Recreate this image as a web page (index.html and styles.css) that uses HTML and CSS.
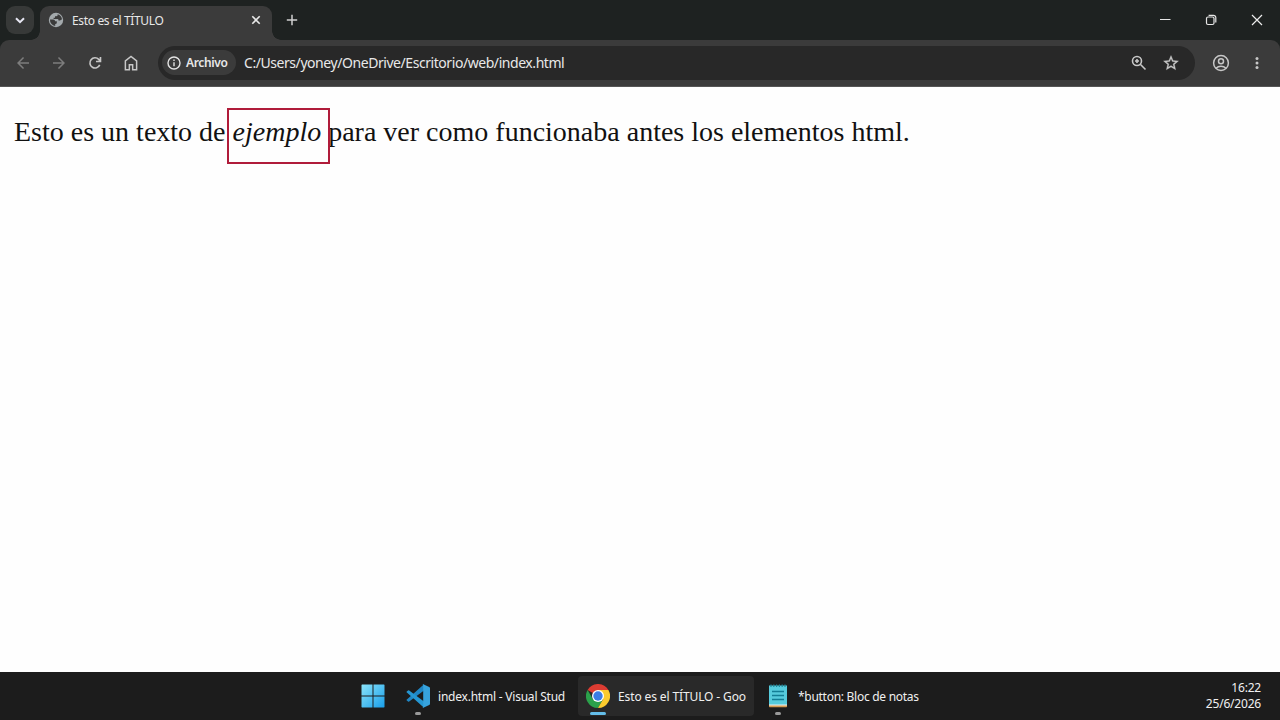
FILE: index.html
```html
<!DOCTYPE html>
<html lang="es">
<head>
  <meta charset="UTF-8">
  <title>Esto es el TÍTULO</title>
  <link rel="stylesheet" href="styles.css">
</head>
<body>

  <!-- BARRA DE PESTAÑAS -->
  <header class="pestanas">
    <button class="buscar-pestanas">
      <svg width="28" height="28" viewBox="0 0 28 28"><path d="M10 12.200l4 4 4-4" fill="none" stroke="#e8e8f4" stroke-width="2"/></svg>
    </button>
    <div class="pestana">
      <svg class="globo" width="16" height="16" viewBox="0 0 16 16">
        <circle cx="8" cy="8" r="7.200" fill="#a3a9ac"/>
        <path d="M2 7.600h3.300q1.800 0 1.800 1.600h1.700v1.500q0 1.200-1.600 1.300v2A6 6 0 0 1 2 7.600zM9.600 2.200v1q0 1.100-1.500 1.100H7v1.500H5.600v1.300h4q.9 0 .9 1.400h1.300q.8 0 1.200-.8l1-.1a6 6 0 0 0-4.400-5.400z" fill="#3b3b3b"/>
      </svg>
      <span class="titulo">Esto es el TÍTULO</span>
      <svg width="16" height="16" viewBox="0 0 16 16"><path d="M4.300 4.300l7.400 7.400M11.700 4.300l-7.400 7.400" stroke="#e8e8e8" stroke-width="1.600"/></svg>
    </div>
    <svg class="nueva" width="16" height="16" viewBox="0 0 16 16"><path d="M8 2.800v10.400M2.800 8h10.400" stroke="#d0d0d0" stroke-width="1.500"/></svg>
    <div class="ventana">
      <svg width="46" height="40" viewBox="0 0 46 40"><path d="M18 19.500h10.500" stroke="#e6e6e6" stroke-width="1"/></svg>
      <svg width="46" height="40" viewBox="0 0 46 40"><g fill="none" stroke="#e6e6e6" stroke-width="1.200"><rect x="18.500" y="17" width="7.500" height="7.500" rx="1.500"/><path d="M20.600 15.300h4.900a2.300 2.300 0 0 1 2.300 2.300v4.900"/></g></svg>
      <svg width="46" height="40" viewBox="0 0 46 40"><path d="M18 15l10 10M28 15l-10 10" stroke="#ededed" stroke-width="1.200"/></svg>
    </div>
  </header>

  <!-- BARRA DE NAVEGACIÓN -->
  <nav class="barra">
    <div class="botones">
      <svg class="apagado" width="18" height="18" viewBox="0 0 24 24"><path d="M20 11H7.830l5.590-5.590L12 4l-8 8 8 8 1.410-1.410L7.830 13H20z"/></svg>
      <svg class="apagado" width="18" height="18" viewBox="0 0 24 24"><path d="M12 4l-1.410 1.410L16.170 11H4v2h12.170l-5.580 5.590L12 20l8-8z"/></svg>
      <svg width="18" height="18" viewBox="0 0 24 24"><path d="M18.300 14.500A6.800 6.800 0 1 1 17 7.200L19 9.300M19.300 4v6h-6" fill="none" stroke="#c7c7c7" stroke-width="2.200"/></svg>
      <svg width="18" height="18" viewBox="0 0 24 24"><path d="M4.500 21V9.300L12 3.300l7.500 6V21h-5.300v-6.800H9.800V21z" fill="none" stroke="#c7c7c7" stroke-width="2"/></svg>
    </div>
    <div class="direccion">
      <div class="archivo">
        <svg width="16" height="16" viewBox="0 0 16 16"><circle cx="8" cy="8" r="6" fill="none" stroke="#e3e3e3" stroke-width="1.400"/><path d="M8 7.200v4M8 4.600v1.500" stroke="#e3e3e3" stroke-width="1.400"/></svg>
        <span>Archivo</span>
      </div>
      <span class="url">C:/Users/yoney/OneDrive/Escritorio/web/index.html</span>
      <svg class="lupa" width="18" height="18" viewBox="0 0 18 18"><g fill="none" stroke="#c7c7c7" stroke-width="1.600"><circle cx="7" cy="7" r="4.500"/><path d="M10.300 10.300l5.200 5.200M7 5v4M5 7h4"/></g></svg>
      <svg width="18" height="18" viewBox="0 0 24 24"><path d="M22 9.240l-7.190-.62L12 2 9.190 8.630 2 9.240l5.460 4.730L5.820 21 12 17.270 18.180 21l-1.630-7.030zM12 15.400l-3.760 2.270 1-4.280-3.320-2.880 4.380-.38L12 6.100l1.710 4.040 4.380.38-3.320 2.880 1 4.280z" stroke="#c7c7c7" stroke-width=".4"/></svg>
    </div>
    <div class="botones derecha">
      <svg width="18" height="18" viewBox="0 0 18 18"><g fill="none" stroke="#c7c7c7" stroke-width="1.500"><circle cx="9" cy="9" r="7.400"/><circle cx="9" cy="7.200" r="2.500"/><path d="M4 14.200c2.700-2.500 7.300-2.500 10 0"/></g></svg>
      <svg width="18" height="18" viewBox="0 0 18 18"><circle cx="9" cy="4.500" r="1.500"/><circle cx="9" cy="9" r="1.500"/><circle cx="9" cy="13.500" r="1.500"/></svg>
    </div>
  </nav>

  <!-- CONTENIDO -->
  <main class="contenido">
    <p>Esto es un texto de <i class="marcado">ejemplo</i> para ver como funcionaba antes los elementos html.</p>
  </main>

  <!-- BARRA DE TAREAS -->
  <footer class="tareas">
    <div class="inicio">
      <svg width="24" height="24" viewBox="0 0 24 24">
        <defs><linearGradient id="azul" gradientUnits="userSpaceOnUse" x1="0" y1="0" x2="24" y2="24"><stop offset="0" stop-color="#8de6fb"/><stop offset="1" stop-color="#169ce8"/></linearGradient></defs>
        <path d="M1 .500h10.500v11H.500V1zM12.500.500H23l.500.500v10.500h-11zM.500 12.500h11v11H1l-.500-.500zM12.500 12.500h11V23l-.500.500H12.500z" fill="url(#azul)"/>
      </svg>
    </div>
    <div class="tarea abierta">
      <svg width="24" height="24" viewBox="0 0 24 24">
        <path d="M.3 15.900L2 17.500q.6.500 1.200 0L18 6.600V.3z" fill="#1f86c4"/>
        <path d="M.3 8.100L2 6.500q.6-.5 1.200 0L18 17.400v6.300z" fill="#2597d3"/>
        <path d="M17.300.3L23.200 3q.8.400.8 1.200v15.600q0 .8-.8 1.200l-5.900 2.700q-.6.200-1.100-.2 1 .4 1-.8V1.300q0-1.200-1-.8.500-.4 1.100-.2z" fill="#37a3dd"/>
      </svg>
      <span class="nombre vscode">index.html - Visual Stud</span>
    </div>
    <div class="tarea abierta activa">
      <svg width="24" height="24" viewBox="0 0 24 24">
        <path d="M12 12L1.600 6A12 12 0 0 1 22.400 6z" fill="#dc3c32"/>
        <path d="M1.600 6A12 12 0 0 0 12 24l5.200-9L12 12 6.800 15z" fill="#2ba14b"/>
        <path d="M12 6h10.400A12 12 0 0 1 12 24l5.200-9z" fill="#fbcb2e"/>
        <circle cx="12" cy="12" r="6" fill="#fff"/>
        <circle cx="12" cy="12" r="4.700" fill="#3c7de6"/>
      </svg>
      <span class="nombre">Esto es el TÍTULO - Goog</span>
    </div>
    <div class="tarea abierta">
      <svg width="24" height="24" viewBox="0 0 24 24">
        <path d="M3 1.500h18v20H3z" fill="#56cbdc"/>
        <path d="M3 21h18v1.500q0 .7-.7.700H3.700q-.7 0-.7-.7z" fill="#d59b52"/>
        <path d="M3 20.500h18v1H3z" fill="#e8eef0"/>
        <path d="M6 7.500h12M6 11.500h12M6 15.500h12" stroke="#137e95" stroke-width="1.400"/>
        <path d="M5 .500v2.500M7.800.500v2.500M10.600.500v2.500M13.400.500v2.500M16.200.500v2.500M19 .500v2.500" stroke="#1f8799" stroke-width="1.200"/>
      </svg>
      <span class="nombre notas">*button: Bloc de notas</span>
    </div>
    <div class="reloj">
      <span>16:22</span>
      <span>25/6/2026</span>
    </div>
  </footer>

</body>
</html>
```
FILE: styles.css
```css
*,
*::before,
*::after {
  box-sizing: border-box;
}
body {
  margin: 0;
  height: 100vh;
  display: flex;
  flex-direction: column;
  overflow: hidden;
  background-color: #1e2221;
  font-family: "Noto Sans", "Open Sans", sans-serif;
  color: #e8e8e8;
}
svg {
  display: block;
  flex-shrink: 0;
}

/* Pestañas */
.pestanas {
  height: 40px;
  display: flex;
  align-items: center;
  padding-left: 6px;
}
.buscar-pestanas {
  width: 28px;
  height: 28px;
  padding: 0;
  border: none;
  border-radius: 9px;
  background-color: #373938;
}
.pestana {
  position: relative;
  align-self: flex-end;
  width: 232px;
  height: 34px;
  margin-left: 6px;
  padding: 0 8px 6px;
  display: flex;
  align-items: center;
  border-radius: 9px 9px 0 0;
  background-color: #3b3b3b;
}
.pestana::before,
.pestana::after {
  content: "";
  position: absolute;
  bottom: 0;
  width: 9px;
  height: 9px;
}
.pestana::before {
  left: -9px;
  background: radial-gradient(circle at 0 0, transparent 8.5px, #3b3b3b 9px);
}
.pestana::after {
  right: -9px;
  background: radial-gradient(circle at 100% 0, transparent 8.5px, #3b3b3b 9px);
}
.titulo {
  flex: 1;
  margin-left: 8px;
  font-size: 12px;
  letter-spacing: -0.35px;
}
.nueva {
  margin-left: 12px;
}
.ventana {
  display: flex;
  margin-left: auto;
}

/* Navegación */
.barra {
  height: 47px;
  display: flex;
  align-items: center;
  padding: 0 5px 1px;
  border-bottom: 1px solid #555;
  border-radius: 9px 9px 0 0;
  background-color: #3b3b3b;
}
.botones {
  display: flex;
  fill: #c7c7c7;
}
.botones svg {
  margin: 0 9px;
}
.apagado {
  fill: #7d7d7d;
}
.direccion {
  flex: 1;
  height: 34px;
  margin: 0 8px 0 9px;
  padding: 0 15px 0 4px;
  display: flex;
  align-items: center;
  border-radius: 17px;
  background-color: #282828;
  fill: #c7c7c7;
}
.archivo {
  width: 74px;
  height: 25px;
  padding-left: 4px;
  display: flex;
  align-items: center;
  gap: 4px;
  border-radius: 13px;
  background-color: #3b3b3b;
  font-size: 12px;
  font-weight: 600;
  letter-spacing: -0.35px;
}
.url {
  flex: 1;
  margin-left: 8px;
  font-size: 14px;
  letter-spacing: -0.44px;
}
.lupa {
  margin-right: 14px;
}

/* Página */
.contenido {
  flex: 1;
  padding: 29px 14px;
  background-color: #fefefe;
  color: #111;
  font-family: "Liberation Serif", "Times New Roman", serif;
}
.contenido p {
  margin: 0;
  font-size: 28px;
  line-height: 32px;
  white-space: nowrap;
}
.marcado {
  position: relative;
}
.marcado::after {
  content: "";
  position: absolute;
  top: -8px;
  left: -6px;
  width: 103px;
  height: 56px;
  border: 2px solid #b01c3a;
}

/* Tareas */
.tareas {
  height: 48px;
  padding: 4px 19px 4px 353px;
  display: flex;
  gap: 4px;
  background-color: #1c1c1c;
  color: #f0f0f0;
}
.inicio {
  width: 41px;
  padding: 8px;
}
.tarea {
  position: relative;
  width: 176px;
  height: 40px;
  padding: 0 8px;
  display: flex;
  align-items: center;
  gap: 8px;
  border-radius: 4px;
}
.abierta::after {
  content: "";
  position: absolute;
  left: 17px;
  bottom: 1px;
  width: 6px;
  height: 3px;
  border-radius: 2px;
  background-color: #9a9a9a;
}
.activa {
  background-color: #292929;
}
.activa::after {
  left: 12px;
  width: 16px;
  background-color: #64bde9;
}
.nombre {
  padding-top: 1px;
  overflow: hidden;
  white-space: nowrap;
  font-size: 12px;
  letter-spacing: -0.12px;
}
.vscode {
  letter-spacing: -0.22px;
}
.notas {
  letter-spacing: -0.28px;
}
.reloj {
  margin-left: auto;
  display: flex;
  flex-direction: column;
  justify-content: center;
  text-align: right;
  font-size: 12px;
  line-height: 16px;
  letter-spacing: -0.2px;
}
```
